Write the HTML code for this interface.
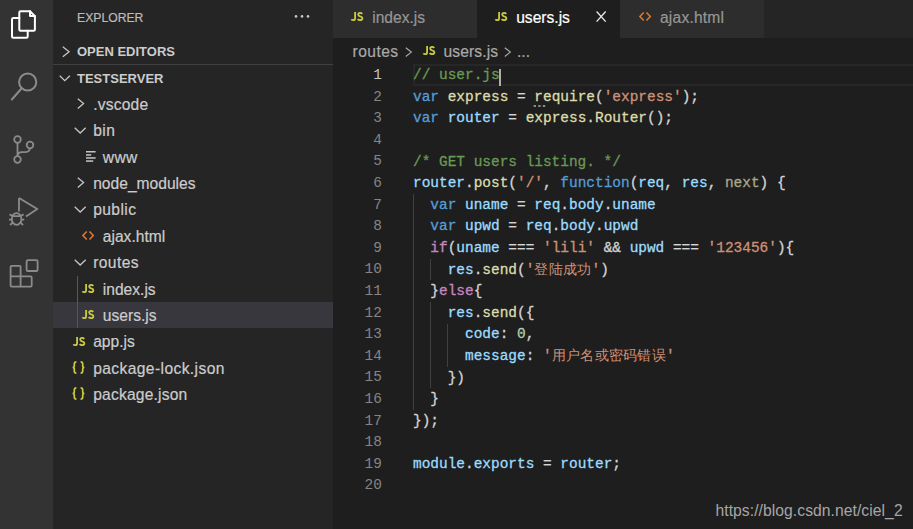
<!DOCTYPE html>
<html><head><meta charset="utf-8">
<style>
html,body{margin:0;padding:0;}
body{width:913px;height:529px;overflow:hidden;position:relative;background:#1e1e1e;font-family:"Liberation Sans",sans-serif;}
.abs{position:absolute;}
#act{left:0;top:0;width:53px;height:529px;background:#333333;}
#side{left:53px;top:0;width:280px;height:529px;background:#252526;}
#tabs{left:333px;top:0;width:580px;height:37.7px;background:#252526;}
.tab{position:absolute;top:0;height:37.7px;width:143.7px;background:#2d2d2d;}
.tab.active{background:#1e1e1e;}
.tt{position:absolute;font-size:15.6px;line-height:20px;white-space:pre;-webkit-text-stroke:0.2px currentColor;}
.st{position:absolute;font-size:15.6px;line-height:20px;white-space:pre;color:#cccccc;-webkit-text-stroke:0.2px currentColor;}
.hd{position:absolute;font-size:13px;line-height:16px;white-space:pre;color:#cccccc;font-weight:bold;}
.ln{position:absolute;left:339.3px;width:42.5px;text-align:right;font-family:"Liberation Mono",monospace;font-size:14.4px;line-height:21.6px;height:21.6px;color:#858585;}
.cl{position:absolute;left:413px;-webkit-text-stroke:0.3px currentColor;font-family:"Liberation Mono",monospace;font-size:14.45px;line-height:21.6px;height:21.6px;white-space:pre;color:#d4d4d4;}
.k{color:#569cd6}.v{color:#9cdcfe}.f{color:#dcdcaa}.s{color:#ce9178}.c{color:#6a9955}.kc{color:#c586c0}.n{color:#b5cea8}.p{color:#a8a88c}
.cj{-webkit-text-stroke:0;letter-spacing:0.3px;}
.g{position:absolute;width:1px;background:#404040;}
svg{position:absolute;overflow:visible;}
</style></head><body>
<div id="act" class="abs"></div>
<div id="side" class="abs"></div>
<div id="tabs" class="abs"><div class="tab" style="left:0"></div><div class="tab active" style="left:143.7px"></div><div class="tab" style="left:287.4px;width:143.2px"></div></div>
<svg width="53" height="300" style="left:0;top:0" fill="none">
  <g stroke="#ffffff" stroke-width="2" stroke-linejoin="round" stroke-linecap="round">
    <path d="M19.3 12.5 Q19.3 11.2 20.6 11.2 H30 L34.9 16.1 V29.4 Q34.9 30.7 33.6 30.7 H20.6 Q19.3 30.7 19.3 29.4 Z"/>
    <path d="M30 11.2 V16.1 H34.9"/>
    <path d="M19.3 18.1 H13.3 Q12 18.1 12 19.4 V36.5 Q12 37.8 13.3 37.8 H26.4 Q27.7 37.8 27.7 36.5 V30.7"/>
  </g>
  <g stroke="#8b8b8b" stroke-width="2" stroke-linecap="round">
    <circle cx="27.7" cy="82" r="8.6"/>
    <path d="M21.5 88.5 L11.8 99.5"/>
  </g>
  <g stroke="#8b8b8b" stroke-width="1.8">
    <circle cx="17.5" cy="139.5" r="3.3"/>
    <circle cx="30" cy="145" r="3.3"/>
    <circle cx="17.5" cy="159.5" r="3.3"/>
    <path d="M17.5 142.8 V156.2"/>
    <path d="M29.9 148.3 Q29.6 152.1 25.5 152.1 H22 Q17.8 152.2 17.6 155.5"/>
  </g>
  <g stroke="#8b8b8b" stroke-width="1.8" stroke-linejoin="round">
    <path d="M19 198 V211.5"/>
    <path d="M19 198 L37.3 209 L26 216.5"/>
    <ellipse cx="16.6" cy="219" rx="4.8" ry="5.8"/>
    <path d="M12.3 216.2 H20.9 M9.6 214.4 L12.6 216 M23.6 214.4 L20.6 216 M9 219.6 H11.8 M24.2 219.6 H21.4 M10.2 225.2 L12.5 222.6 M23 225.2 L20.7 222.6"/>
  </g>
  <g stroke="#8b8b8b" stroke-width="1.8" stroke-linejoin="round">
    <path d="M11.8 265.8 H19.6 Q20.6 265.8 20.6 266.8 V286.6 H11.8 Q10.6 286.6 10.6 285.4 V267 Q10.6 265.8 11.8 265.8 Z"/>
    <path d="M10.6 276.3 H30.6 Q31.7 276.3 31.7 277.4 V285.5 Q31.7 286.6 30.6 286.6 H20.6"/>
    <rect x="26.6" y="260.1" width="11" height="10.9" rx="1.3"/>
  </g>
</svg>
<div class="st" style="left:77px;top:7.7px;font-size:12.2px;color:#bbbbbb">EXPLORER</div>
<svg width="20" height="6" style="left:294px;top:14px"><circle cx="2" cy="2.4" r="1.3" fill="#c5c5c5"/><circle cx="8" cy="2.4" r="1.3" fill="#c5c5c5"/><circle cx="14" cy="2.4" r="1.3" fill="#c5c5c5"/></svg>
<div class="hd" style="left:77px;top:43.6px">OPEN EDITORS</div>
<svg width="12" height="14" style="left:61.6px;top:45.6px" fill="none"><path d="M0.8 0.7 L7.07 5.70 L0.8 10.70" stroke="#c5c5c5" stroke-width="1.30"/></svg>
<div class="abs" style="left:53px;top:64px;width:280px;height:1px;background:#414141"></div>
<div class="hd" style="left:77px;top:70.6px">TESTSERVER</div>
<svg width="14" height="10" style="left:58.7px;top:75.3px" fill="none"><path d="M0.7 0.8 L5.80 5.60 L10.90 0.8" stroke="#c5c5c5" stroke-width="1.30"/></svg>
<div class="abs" style="left:53px;top:302.1px;width:280px;height:26.4px;background:#37373d"></div>
<div class="abs" style="left:77.1px;top:275.9px;width:1px;height:52.6px;background:#585858"></div>
<div class="st" style="left:93.2px;top:95.0px;letter-spacing:0.20px">.vscode</div>
<svg width="12" height="14" style="left:77.4px;top:97.6px" fill="none"><path d="M0.8 0.7 L6.60 5.60 L0.8 10.50" stroke="#c5c5c5" stroke-width="1.30"/></svg>
<div class="st" style="left:93.2px;top:121.0px;letter-spacing:0.50px">bin</div>
<svg width="14" height="10" style="left:73.6px;top:127.1px" fill="none"><path d="M0.7 0.8 L6.20 6.00 L11.70 0.8" stroke="#c5c5c5" stroke-width="1.30"/></svg>
<div class="st" style="left:102.8px;top:148.0px;letter-spacing:0.40px">www</div>
<svg width="12" height="12" style="left:85.8px;top:150.9px"><g fill="#c5c5c5"><rect x="0" y="0" width="9.6" height="1.5"/><rect x="0" y="3.2" width="5.2" height="1.5"/><rect x="0" y="6.2" width="9.6" height="1.5"/><rect x="0" y="9.3" width="7.2" height="1.5"/></g></svg>
<div class="st" style="left:93.2px;top:174.0px">node_modules</div>
<svg width="12" height="14" style="left:77.4px;top:176.6px" fill="none"><path d="M0.8 0.7 L6.60 5.60 L0.8 10.50" stroke="#c5c5c5" stroke-width="1.30"/></svg>
<div class="st" style="left:93.2px;top:200.0px;letter-spacing:0.40px">public</div>
<svg width="14" height="10" style="left:73.6px;top:206.1px" fill="none"><path d="M0.7 0.8 L6.20 6.00 L11.70 0.8" stroke="#c5c5c5" stroke-width="1.30"/></svg>
<div class="st" style="left:102.8px;top:227.0px">ajax.html</div>
<svg width="14" height="12" style="left:82.1px;top:231.1px" fill="none"><path d="M4.7 0.4 L0.9 4.45 L4.7 8.5 M7.5 0.4 L11.3 4.45 L7.5 8.5" stroke="#e37933" stroke-width="1.5"/></svg>
<div class="st" style="left:93.2px;top:253.0px;letter-spacing:0.40px">routes</div>
<svg width="14" height="10" style="left:73.6px;top:259.1px" fill="none"><path d="M0.7 0.8 L6.20 6.00 L11.70 0.8" stroke="#c5c5c5" stroke-width="1.30"/></svg>
<div class="st" style="left:102.8px;top:280.0px">index.js</div>
<svg width="14" height="11" style="left:82.2px;top:283.8px" fill="none"><g stroke="#cbcb41" stroke-width="1.8"><path d="M4.1 0 V5.9 Q4.1 8.2 2.2 8.2 Q1.0 8.2 0.4 7.3"/><path d="M11.2 1.9 Q10.5 0.9 9.1 0.9 Q7.2 0.9 7.2 2.6 Q7.2 3.9 9.1 4.4 Q11.4 4.9 11.4 6.3 Q11.4 8.2 9.1 8.2 Q7.4 8.2 6.7 7.1"/></g></svg>
<div class="st" style="left:102.8px;top:306.0px">users.js</div>
<svg width="14" height="11" style="left:82.2px;top:310.2px" fill="none"><g stroke="#cbcb41" stroke-width="1.8"><path d="M4.1 0 V5.9 Q4.1 8.2 2.2 8.2 Q1.0 8.2 0.4 7.3"/><path d="M11.2 1.9 Q10.5 0.9 9.1 0.9 Q7.2 0.9 7.2 2.6 Q7.2 3.9 9.1 4.4 Q11.4 4.9 11.4 6.3 Q11.4 8.2 9.1 8.2 Q7.4 8.2 6.7 7.1"/></g></svg>
<div class="st" style="left:93.2px;top:332.0px">app.js</div>
<svg width="14" height="11" style="left:72.9px;top:336.6px" fill="none"><g stroke="#cbcb41" stroke-width="1.8"><path d="M4.1 0 V5.9 Q4.1 8.2 2.2 8.2 Q1.0 8.2 0.4 7.3"/><path d="M11.2 1.9 Q10.5 0.9 9.1 0.9 Q7.2 0.9 7.2 2.6 Q7.2 3.9 9.1 4.4 Q11.4 4.9 11.4 6.3 Q11.4 8.2 9.1 8.2 Q7.4 8.2 6.7 7.1"/></g></svg>
<div class="st" style="left:93.2px;top:359.0px;letter-spacing:0.40px">package-lock.json</div>
<svg width="14" height="14" style="left:72.3px;top:360.8px" fill="none"><g stroke="#cbcb41" stroke-width="1.7"><path d="M4.4 0.8 Q2.3 0.8 2.3 2.9 V4.9 Q2.3 6.5 0.6 6.5 Q2.3 6.5 2.3 8.1 V10.1 Q2.3 12.2 4.4 12.2"/><path d="M8.6 0.8 Q10.7 0.8 10.7 2.9 V4.9 Q10.7 6.5 12.4 6.5 Q10.7 6.5 10.7 8.1 V10.1 Q10.7 12.2 8.6 12.2"/></g></svg>
<div class="st" style="left:93.2px;top:385.0px;letter-spacing:0.20px">package.json</div>
<svg width="14" height="14" style="left:72.3px;top:386.8px" fill="none"><g stroke="#cbcb41" stroke-width="1.7"><path d="M4.4 0.8 Q2.3 0.8 2.3 2.9 V4.9 Q2.3 6.5 0.6 6.5 Q2.3 6.5 2.3 8.1 V10.1 Q2.3 12.2 4.4 12.2"/><path d="M8.6 0.8 Q10.7 0.8 10.7 2.9 V4.9 Q10.7 6.5 12.4 6.5 Q10.7 6.5 10.7 8.1 V10.1 Q10.7 12.2 8.6 12.2"/></g></svg>
<svg width="14" height="11" style="left:351.3px;top:12.3px" fill="none"><g stroke="#cbcb41" stroke-width="1.8"><path d="M4.1 0 V5.9 Q4.1 8.2 2.2 8.2 Q1.0 8.2 0.4 7.3"/><path d="M11.2 1.9 Q10.5 0.9 9.1 0.9 Q7.2 0.9 7.2 2.6 Q7.2 3.9 9.1 4.4 Q11.4 4.9 11.4 6.3 Q11.4 8.2 9.1 8.2 Q7.4 8.2 6.7 7.1"/></g></svg>
<div class="tt" style="left:372.2px;top:8.3px;color:#969696">index.js</div>
<svg width="14" height="11" style="left:495.3px;top:12.3px" fill="none"><g stroke="#cbcb41" stroke-width="1.8"><path d="M4.1 0 V5.9 Q4.1 8.2 2.2 8.2 Q1.0 8.2 0.4 7.3"/><path d="M11.2 1.9 Q10.5 0.9 9.1 0.9 Q7.2 0.9 7.2 2.6 Q7.2 3.9 9.1 4.4 Q11.4 4.9 11.4 6.3 Q11.4 8.2 9.1 8.2 Q7.4 8.2 6.7 7.1"/></g></svg>
<div class="tt" style="left:516.2px;top:8.3px;color:#ffffff">users.js</div>
<svg width="12" height="12" style="left:595.6px;top:10.8px" fill="none"><path d="M0.6 0.5 L9.7 10.6 M9.7 0.5 L0.6 10.6" stroke="#e8e8e8" stroke-width="1.35"/></svg>
<svg width="14" height="12" style="left:639.0px;top:12.2px" fill="none"><path d="M4.7 0.4 L0.9 4.45 L4.7 8.5 M7.5 0.4 L11.3 4.45 L7.5 8.5" stroke="#e37933" stroke-width="1.5"/></svg>
<div class="tt" style="left:660px;top:8px;color:#969696;letter-spacing:0.2px">ajax.html</div>
<div class="tt" style="left:352.5px;top:42.2px;color:#a9a9a9;letter-spacing:0.45px">routes</div>
<svg width="12" height="14" style="left:404.9px;top:46.9px" fill="none"><path d="M0.8 0.7 L6.32 5.10 L0.8 9.50" stroke="#a9a9a9" stroke-width="1.20"/></svg>
<svg width="14" height="11" style="left:422.9px;top:46.3px" fill="none"><g stroke="#cbcb41" stroke-width="1.8"><path d="M4.1 0 V5.9 Q4.1 8.2 2.2 8.2 Q1.0 8.2 0.4 7.3"/><path d="M11.2 1.9 Q10.5 0.9 9.1 0.9 Q7.2 0.9 7.2 2.6 Q7.2 3.9 9.1 4.4 Q11.4 4.9 11.4 6.3 Q11.4 8.2 9.1 8.2 Q7.4 8.2 6.7 7.1"/></g></svg>
<div class="tt" style="left:443.6px;top:42.2px;color:#a9a9a9;letter-spacing:0.1px">users.js</div>
<svg width="12" height="14" style="left:504.3px;top:46.9px" fill="none"><path d="M0.8 0.7 L6.32 5.10 L0.8 9.50" stroke="#a9a9a9" stroke-width="1.20"/></svg>
<div class="tt" style="left:517px;top:42.2px;color:#a9a9a9">...</div>
<div class="tt" style="left:715.5px;top:500.5px;font-size:15.7px;color:#a6a6a6;-webkit-text-stroke:0;letter-spacing:0.05px">https://blog.csdn.net/ciel_2</div>
<div class="abs" style="left:413px;top:64px;width:500px;height:22px;box-sizing:border-box;border:2px solid #272727;border-right:none"></div>
<div class="ln" style="top:65.0px;color:#c6c6c6">1</div>
<div class="cl" style="top:65.1px"><span class="c">// user.js</span></div>
<div class="ln" style="top:86.6px;color:#858585">2</div>
<div class="cl" style="top:86.7px"><span class="k">var</span> <span class="f">express</span> = <span class="f">require</span>(<span class="s">'express'</span>);</div>
<div class="ln" style="top:108.2px;color:#858585">3</div>
<div class="cl" style="top:108.3px"><span class="k">var</span> <span class="v">router</span> = <span class="f">express</span>.<span class="f">Router</span>();</div>
<div class="ln" style="top:129.8px;color:#858585">4</div>
<div class="ln" style="top:151.4px;color:#858585">5</div>
<div class="cl" style="top:151.5px"><span class="c">/* GET users listing. */</span></div>
<div class="ln" style="top:173.0px;color:#858585">6</div>
<div class="cl" style="top:173.1px"><span class="v">router</span>.<span class="f">post</span>(<span class="s">'/'</span>, <span class="k">function</span>(<span class="v">req</span>, <span class="v">res</span>, <span class="p">next</span>) {</div>
<div class="ln" style="top:194.6px;color:#858585">7</div>
<div class="cl" style="top:194.7px">  <span class="k">var</span> <span class="v">uname</span> = <span class="v">req</span>.<span class="v">body</span>.<span class="v">uname</span></div>
<div class="ln" style="top:216.2px;color:#858585">8</div>
<div class="cl" style="top:216.3px">  <span class="k">var</span> <span class="v">upwd</span> = <span class="v">req</span>.<span class="v">body</span>.<span class="v">upwd</span></div>
<div class="ln" style="top:237.8px;color:#858585">9</div>
<div class="cl" style="top:237.9px">  <span class="kc">if</span>(<span class="v">uname</span> === <span class="s">'lili'</span> &amp;&amp; <span class="v">upwd</span> === <span class="s">'123456'</span>){</div>
<div class="ln" style="top:259.4px;color:#858585">10</div>
<div class="cl" style="top:259.5px">    <span class="v">res</span>.<span class="f">send</span>(<span class="s">'<span class="cj">登陆成功</span>'</span>)</div>
<div class="ln" style="top:281.0px;color:#858585">11</div>
<div class="cl" style="top:281.1px">  }<span class="kc">else</span>{</div>
<div class="ln" style="top:302.6px;color:#858585">12</div>
<div class="cl" style="top:302.7px">    <span class="v">res</span>.<span class="f">send</span>({</div>
<div class="ln" style="top:324.2px;color:#858585">13</div>
<div class="cl" style="top:324.3px">      <span class="v">code</span>: <span class="n">0</span>,</div>
<div class="ln" style="top:345.8px;color:#858585">14</div>
<div class="cl" style="top:345.9px">      <span class="v">message</span>: <span class="s">'<span class="cj">用户名或密码错误</span>'</span></div>
<div class="ln" style="top:367.4px;color:#858585">15</div>
<div class="cl" style="top:367.5px">    })</div>
<div class="ln" style="top:389.0px;color:#858585">16</div>
<div class="cl" style="top:389.1px">  }</div>
<div class="ln" style="top:410.6px;color:#858585">17</div>
<div class="cl" style="top:410.7px">});</div>
<div class="ln" style="top:432.2px;color:#858585">18</div>
<div class="ln" style="top:453.8px;color:#858585">19</div>
<div class="cl" style="top:453.9px"><span class="v">module</span>.<span class="v">exports</span> = <span class="v">router</span>;</div>
<div class="ln" style="top:475.4px;color:#858585">20</div>
<div class="g" style="left:413.0px;top:194.1px;height:216.0px"></div>
<div class="g" style="left:430.0px;top:258.9px;height:21.6px"></div>
<div class="g" style="left:430.0px;top:302.1px;height:86.4px"></div>
<div class="g" style="left:447.0px;top:323.7px;height:43.2px"></div>
<div class="abs" style="left:499px;top:68.8px;width:2px;height:17px;background:#aeafad"></div>
<svg width="16" height="4" style="left:533px;top:105px"><g fill="#8a8a8a"><rect x="0.6" y="0" width="2.4" height="2"/><rect x="5.2" y="0" width="2.4" height="2"/><rect x="9.8" y="0" width="2.4" height="2"/></g></svg>
</body></html>
